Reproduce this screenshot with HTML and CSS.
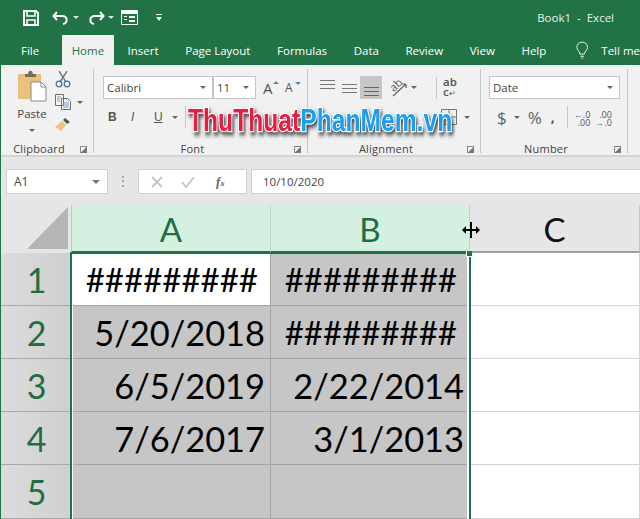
FILE: index.html
```html
<!DOCTYPE html>
<html lang="en">
<head>
  <meta charset="UTF-8" />
  <title>Book1 - Excel</title>
  <link rel="stylesheet" href="styles.css">
</head>
<body>
<div class="app">

  <div class="titlebar">
    <svg class="qat-save" width="18" height="18" viewBox="0 0 18 18"><path d="M2 2h12l2 2v12H2z" fill="none" stroke="#fff" stroke-width="2"/><path d="M5 2v5h8V2M5 16v-5h8v5" fill="none" stroke="#fff" stroke-width="1.6"/></svg>
    <svg class="qat-undo" width="18" height="14" viewBox="0 0 18 14"><path d="M5 1L1.500 5 5 9M2 5h8c6 0 6 7 1 8" fill="none" stroke="#fff" stroke-width="2"/></svg>
    <span class="qat-caret"></span>
    <svg class="qat-redo" width="18" height="14" viewBox="0 0 18 14"><path d="M13 1l3.500 4L13 9M16 5H8c-6 0-6 7-1 8" fill="none" stroke="#fff" stroke-width="2"/></svg>
    <span class="qat-caret"></span>
    <svg class="qat-form" width="17" height="15" viewBox="0 0 17 15"><path d="M.5.500h16v14H.500z" fill="none" stroke="#fff"/><path d="M1 1h15v3H1zM3 6h3v1H3zM3 9h3v1H3zM8 6h6v2H8zM8 10h6v2H8z" fill="#fff"/></svg>
    <svg class="qat-more" width="6" height="8" viewBox="0 0 6 8"><path d="M0 0h6v1H0zM0 3h6L3 7z" fill="#fff"/></svg>
    <span class="doc-title">Book1&nbsp; -&nbsp; Excel</span>
  </div>

  <div class="tabs">
    <span class="tab tab-file">File</span>
    <span class="tab tab-home">Home</span>
    <span class="tab">Insert</span>
    <span class="tab">Page Layout</span>
    <span class="tab">Formulas</span>
    <span class="tab">Data</span>
    <span class="tab">Review</span>
    <span class="tab">View</span>
    <span class="tab">Help</span>
    <svg class="bulb" width="14" height="19" viewBox="0 0 14 19"><path d="M4.500 13.500C4 10 1 9 1 6a6 6 0 0 1 12 0c0 3-3 4-3.500 7.500zM5 16h4M6 18h2" fill="none" stroke="#fff"/></svg>
    <span class="tab tab-tell">Tell me</span>
  </div>

  <div class="ribbon">
    <section class="group group-clip">
      <div class="group-body clip-body">
        <div class="paste">
          <svg width="30" height="31" viewBox="0 0 30 31"><path d="M1 3h23v25H1z" fill="#e8c27c"/><path d="M8 5V3h3l1-3h3l1 3h3v3H8z" fill="#7a6a58"/><path d="M14 11h10l5 5v14H14z" fill="#fff" stroke="#8a8a8a"/><path d="M24 11v5h5" fill="none" stroke="#8a8a8a"/></svg>
          <span class="paste-label">Paste</span>
          <span class="caret caret-paste"></span>
        </div>
        <div class="clip-tools">
          <svg width="16" height="17" viewBox="0 0 16 17"><path d="M4 0l7 11M12 0L5 11" stroke="#777" stroke-width="1.400" fill="none"/><circle cx="4" cy="13" r="2.800" fill="none" stroke="#3f78ae" stroke-width="1.300"/><circle cx="12" cy="13" r="2.800" fill="none" stroke="#3f78ae" stroke-width="1.300"/></svg>
          <div class="copy-row">
            <svg width="16" height="16" viewBox="0 0 16 16"><path d="M.5.500h8v11h-8zM6.500 4.500h6l3 3v8h-9z" fill="#f4f4f4" stroke="#6d6d6d"/><path d="M8 9h6M8 11h6M8 13h6M2 3h4M2 5h3M2 7h3" stroke="#7b9cbc"/></svg>
            <span class="caret"></span>
          </div>
          <svg class="brush" width="16" height="15" viewBox="0 0 16 15"><path d="M10 1l5 4-3 2-4-4z" fill="#555"/><path d="M7 4l4 4-5 6-6-4z" fill="#ecc37f"/></svg>
        </div>
      </div>
      <div class="group-label">Clipboard<i class="launcher"></i></div>
    </section>

    <section class="group group-font">
      <div class="group-body">
        <div class="tool-row">
          <div class="combo combo-font">Calibri<span class="caret"></span></div>
          <div class="combo combo-size">11<span class="caret"></span></div>
          <span class="grow-a">A<i class="tick tick-up"></i></span>
          <span class="grow-a grow-small">A<i class="tick tick-down"></i></span>
        </div>
        <div class="tool-row row-two row-fmt">
          <b class="fmt">B</b>
          <i class="fmt fmt-i">I</i>
          <u class="fmt fmt-u">U</u>
          <span class="caret"></span>
          <span class="v-sep"></span>
        </div>
      </div>
      <div class="group-label">Font<i class="launcher"></i></div>
    </section>

    <section class="group group-align">
      <div class="group-body">
        <div class="tool-row">
          <svg class="lines lines-top" width="15" height="9" viewBox="0 0 15 9"><path d="M0 .500h15M0 4.500h15M0 8.500h15" stroke="#777"/></svg>
          <svg class="lines lines-mid" width="15" height="9" viewBox="0 0 15 9"><path d="M0 .500h15M0 4.500h15M0 8.500h15" stroke="#777"/></svg>
          <span class="active-btn"><svg width="15" height="9" viewBox="0 0 15 9"><path d="M0 .500h15M0 4.500h15M0 8.500h15" stroke="#666"/></svg></span>
          <span class="orient">
            <span class="orient-text">ab</span>
            <svg width="20" height="19" viewBox="0 0 20 19"><path d="M5 18L18 6M18 6h-4M18 6v4" fill="none" stroke="#666" stroke-width="1.200"/></svg>
          </span>
          <span class="caret caret-orient"></span>
          <span class="v-sep sep-wrap"></span>
          <span class="wrap-text">ab<br>c<em>↵</em></span>
        </div>
        <div class="tool-row row-two row-merge">
          <svg width="16" height="16" viewBox="0 0 16 16"><path d="M.5.500h15v15H.500zM8 1v4M8 11v4M1 8h14" fill="none" stroke="#777"/></svg>
          <span class="caret"></span>
        </div>
      </div>
      <div class="group-label">Alignment<i class="launcher"></i></div>
    </section>

    <section class="group group-number">
      <div class="group-body">
        <div class="tool-row">
          <div class="combo combo-number">Date<span class="caret"></span></div>
        </div>
        <div class="tool-row row-two row-num">
          <span class="num-sign">$</span>
          <span class="caret"></span>
          <span class="num-sign num-pct">%</span>
          <span class="num-comma">,</span>
          <span class="v-sep sep-num"></span>
          <span class="dec">
            <span><b class="arrow">←</b>.0</span>
            <span>.00</span>
          </span>
          <span class="dec dec-right">
            <span>.00</span>
            <span><b class="arrow">→</b>.0</span>
          </span>
        </div>
      </div>
      <div class="group-label">Number<i class="launcher"></i></div>
    </section>
  </div>

  <div class="formula-bar">
    <div class="name-box">A1<span class="caret caret-name"></span></div>
    <span class="grip"></span>
    <div class="fx-box">
      <svg width="12" height="12" viewBox="0 0 12 12"><path d="M1 1l10 10M11 1L1 11" stroke="#c4c4c4" stroke-width="1.800"/></svg>
      <svg width="14" height="12" viewBox="0 0 14 12"><path d="M1 6l4 5 8-10" fill="none" stroke="#c4c4c4" stroke-width="1.800"/></svg>
      <span class="fx">f<small>x</small></span>
    </div>
    <div class="formula-input">10/10/2020</div>
  </div>

  <div class="sheet">
    <div class="corner"><svg width="45" height="44" viewBox="0 0 45 44"><path d="M1 43L42 1v42z" fill="#b5b5b5"/></svg></div>
    <div class="col-head active">A</div>
    <div class="col-head active">B</div>
    <div class="col-head">C</div>

    <div class="row-head">1</div>
    <div class="cell first hash">#########</div>
    <div class="cell sel hash">#########</div>
    <div class="cell"></div>

    <div class="row-head">2</div>
    <div class="cell sel">5/20/2018</div>
    <div class="cell sel hash">#########</div>
    <div class="cell"></div>

    <div class="row-head">3</div>
    <div class="cell sel">6/5/2019</div>
    <div class="cell sel">2/22/2014</div>
    <div class="cell"></div>

    <div class="row-head">4</div>
    <div class="cell sel">7/6/2017</div>
    <div class="cell sel">3/1/2013</div>
    <div class="cell"></div>

    <div class="row-head">5</div>
    <div class="cell sel"></div>
    <div class="cell sel"></div>
    <div class="cell"></div>

    <div class="selection"><span class="handle"></span></div>
    <svg class="resize-cursor" width="18" height="16" viewBox="0 0 18 16"><path d="M8 0h2v16H8z" fill="#000"/><path d="M0 8l4-4v3h4v2H4v3zM18 8l-4-4v3h-4v2h4v3z" fill="#000"/></svg>
  </div>

  <div class="watermark"><span class="wm-red">ThuThuat</span><span class="wm-blue">PhanMem.vn</span></div>
</div>
</body>
</html>
```

FILE: styles.css
```css
* {
  box-sizing: border-box;
}

body {
  margin: 0;
  overflow: hidden;
  font-family: 'Open Sans', 'Noto Sans', sans-serif;
  color: #444;
}

.app {
  position: relative;
  width: 640px;
  height: 519px;
  overflow: hidden;
  background: #fff;
  border-left: 1px solid #217346;
}

/* title bar */
.titlebar {
  height: 35px;
  background: #217346;
  display: flex;
  align-items: center;
  color: #fff;
}

.qat-save { margin-left: 21px; }
.qat-undo { margin-left: 12px; }
.qat-redo { margin-left: 8px; }
.qat-form { margin-left: 7px; }
.qat-more { margin-left: 18px; }

.qat-caret {
  width: 0;
  height: 0;
  margin-left: 3px;
  border: 3px solid transparent;
  border-top: 3px solid #d8e6de;
  border-bottom: 0;
}

.doc-title {
  margin-left: auto;
  margin-right: 26px;
  font-size: 11.500px;
  color: #e9f1ec;
}

/* tabs */
.tabs {
  height: 30px;
  background: #217346;
  display: flex;
  align-items: stretch;
  padding-left: 20px;
  font-size: 11.500px;
  color: #fff;
}

.tab {
  display: flex;
  align-items: center;
  margin-right: 26.600px;
  padding-top: 1px;
  white-space: nowrap;
}

.tab-file { margin-right: 23px; }

.tab-home {
  width: 58px;
  margin-right: 14px;
  justify-content: center;
  background: #f1f1f1;
  color: #217346;
}

.bulb {
  margin: 6px 13px 0 3px;
}

.tab-tell { margin-right: 0; }

/* ribbon */
.ribbon {
  height: 92px;
  background: #f1f1f1;
  border-bottom: 2px solid #d4d4d4;
  display: flex;
  padding-top: 4px;
}

.group {
  height: 84px;
  display: flex;
  flex-direction: column;
  border-right: 1px solid #c6c6c6;
}

.group-clip { width: 93px; }
.group-font { width: 214px; }
.group-align { width: 173px; }
.group-number { width: 147px; }

.group-body {
  flex: 1;
  padding-top: 7px;
}

.group-label {
  position: relative;
  height: 10px;
  padding-right: 16px;
  text-align: center;
  font-size: 11px;
  line-height: 12px;
  letter-spacing: 0.200px;
}

.launcher {
  position: absolute;
  right: 6px;
  top: 3px;
  width: 7px;
  height: 7px;
  border-left: 1px solid #888;
  border-top: 1px solid #888;
  background: linear-gradient(135deg, transparent 45%, #777 45%);
}

.caret {
  display: inline-block;
  width: 0;
  height: 0;
  border: 3px solid transparent;
  border-top: 3px solid #666;
  border-bottom: 0;
}

.tool-row {
  display: flex;
  align-items: center;
  height: 23px;
}

.row-two {
  height: 20px;
  margin-top: 8px;
}

.v-sep {
  width: 1px;
  height: 22px;
  background: #c6c6c6;
}

/* clipboard */
.clip-body {
  display: flex;
  padding-left: 16px;
  padding-top: 2px;
}

.paste {
  width: 30px;
  display: flex;
  flex-direction: column;
  align-items: center;
}

.paste-label {
  margin-top: 4px;
  font-size: 11.500px;
  line-height: 16px;
}

.caret-paste {
  margin-top: 7px;
}

.clip-tools {
  margin-left: 8px;
  display: flex;
  flex-direction: column;
  gap: 6px;
}

.copy-row {
  display: flex;
  align-items: center;
  gap: 6px;
}

.clip-tools svg {
  display: block;
}

.brush {
  margin-top: 1px;
}

/* font */
.group-font .group-body {
  padding-left: 9px;
}

.combo {
  height: 23px;
  background: #fff;
  border: 1px solid #c6c6c6;
  display: flex;
  align-items: center;
  justify-content: space-between;
  padding: 0 6px 0 3px;
  font-size: 11.500px;
  color: #444;
}

.combo-font { width: 110px; }
.combo-size { width: 43px; }

.grow-a {
  position: relative;
  margin-left: 7px;
  width: 22px;
  font-size: 15px;
  color: #555;
}

.grow-small {
  margin-left: 0;
  font-size: 12px;
}

.tick {
  position: absolute;
  top: 3px;
  left: 10px;
  border: 3px solid transparent;
  border-bottom: 3px solid #5b87ad;
  border-top: 0;
}

.tick-down {
  border-top: 3px solid #5b87ad;
  border-bottom: 0;
}

.row-fmt {
  margin-left: -4px;
}

.row-two .fmt {
  width: 23px;
  padding-left: 9px;
  font-size: 12px;
  color: #555;
  font-family: 'Liberation Sans', sans-serif;
}

.row-two .fmt-u {
  margin-right: 4px;
}

.row-two .v-sep {
  margin-left: 7px;
}

/* alignment */
.group-align .group-body {
  padding-left: 12px;
}

.lines-top {
  margin: -6px 0 0 0;
}

.lines-mid {
  margin: 2px 0 0 7px;
}

.active-btn {
  width: 22px;
  height: 23px;
  margin-left: 3px;
  background: #c6c6c6;
  display: flex;
  align-items: flex-end;
  justify-content: center;
  padding-bottom: 3px;
}

.orient {
  position: relative;
  width: 20px;
  height: 19px;
  margin-left: 6px;
}

.orient svg {
  display: block;
}

.orient-text {
  position: absolute;
  left: 1px;
  top: 0;
  font-size: 11px;
  line-height: 13px;
  color: #555;
  transform: rotate(-42deg);
}

.caret-orient {
  margin-left: 3px;
}

.row-two .sep-wrap,
.sep-wrap {
  margin-left: 19px;
}

.wrap-text {
  margin-left: 6px;
  font-size: 11.500px;
  line-height: 10px;
  font-weight: 600;
  color: #555;
}

.wrap-text em {
  font-style: normal;
  font-size: 8px;
  font-weight: normal;
}

.row-merge {
  padding-left: 121px;
  gap: 7px;
}

/* number */
.group-number .group-body {
  padding-left: 8px;
}

.combo-number {
  width: 131px;
  padding-left: 3px;
}

.row-num {
  padding-left: 8px;
}

.num-sign {
  font-size: 17px;
  color: #666;
}

.row-num .caret {
  margin-left: 7px;
}

.num-pct {
  margin-left: 8px;
}

.num-comma {
  margin-left: 9px;
  font-size: 14px;
  font-weight: bold;
  color: #555;
  line-height: 10px;
}

.row-num .sep-num {
  margin-left: 12px;
}

.dec {
  display: flex;
  flex-direction: column;
  align-items: flex-end;
  margin-left: 6px;
  padding-top: 3px;
  font-size: 9px;
  line-height: 8px;
  color: #555;
}

.dec-right {
  margin-left: 5px;
}

.arrow {
  color: #4a79a5;
  font-weight: normal;
}

/* formula bar */
.formula-bar {
  height: 48px;
  background: #e6e6e6;
  display: flex;
  align-items: flex-start;
  padding: 12px 0 0 5px;
}

.name-box {
  width: 102px;
  height: 25px;
  background: #fff;
  border: 1px solid #d0d0d0;
  display: flex;
  align-items: center;
  justify-content: space-between;
  padding: 0 7px;
  font-size: 12px;
}

.caret-name {
  border-width: 4px;
  border-top-width: 4px;
  border-top-color: #777;
}

.grip {
  width: 2px;
  height: 11px;
  margin: 7px 14px 0 14px;
  background: repeating-linear-gradient(#aaa 0 2px, transparent 2px 4.500px);
}

.fx-box {
  width: 109px;
  height: 25px;
  background: #fff;
  border: 1px solid #d0d0d0;
  display: flex;
  align-items: center;
  padding-left: 12px;
  gap: 18px;
}

.fx {
  margin-left: 3px;
  font-family: 'Liberation Serif', serif;
  font-style: italic;
  font-weight: bold;
  font-size: 13px;
  color: #666;
}

.fx small {
  font-size: 9px;
}

.formula-input {
  flex: 1;
  height: 25px;
  margin-left: 4px;
  padding-left: 11px;
  background: #fff;
  border: 1px solid #d0d0d0;
  border-right: 0;
  display: flex;
  align-items: center;
  font-size: 11.500px;
}

/* sheet */
.sheet {
  position: relative;
  display: grid;
  grid-template-columns: 71px 199px 199px 170px;
  grid-template-rows: 48px 53px 53px 53px 53px 54px;
  background: #fff;
  font-family: Lato, 'Liberation Sans', sans-serif;
}

.corner {
  background: #e6e6e6;
  border-right: 1px solid #c6c6c6;
  display: flex;
  align-items: flex-end;
  justify-content: flex-end;
  padding: 0 0 3px 0;
}

.col-head {
  background: #e6e6e6;
  border-right: 1px solid #c6c6c6;
  border-bottom: 2px solid #9f9f9f;
  display: flex;
  align-items: center;
  justify-content: center;
  font-size: 33px;
  color: #111;
  padding-top: 2px;
}

.col-head.active {
  background: #d3f0e0;
  color: #1f6e43;
  border-bottom-color: #1f6e43;
  border-right-color: #bcd9c9;
}

.row-head {
  background: linear-gradient(90deg, #dcdcdc, #cfcfcf);
  border-bottom: 1px solid #a8a8a8;
  display: flex;
  align-items: center;
  justify-content: center;
  font-size: 34px;
  color: #1f6e43;
}

.cell {
  display: flex;
  align-items: center;
  justify-content: flex-end;
  padding-right: 5px;
  font-size: 34.400px;
  color: #000;
  border-right: 1px solid #d4d4d4;
  border-bottom: 1px solid #d4d4d4;
  white-space: nowrap;
}

.cell.hash {
  font-size: 33px;
  padding-right: 12px;
}

.cell.sel {
  background: #c6c6c6;
  border-right-color: #a4a4a4;
  border-bottom-color: #a4a4a4;
}

.cell.first {
  background: #fff;
  border-right-color: #a4a4a4;
  border-bottom-color: #a4a4a4;
}

.selection {
  position: absolute;
  left: 69px;
  top: 47px;
  width: 401px;
  height: 272px;
  border: 2px solid #217346;
  box-shadow: inset 1px 0 0 #fff, inset -2px 0 0 #fff;
}

.handle {
  position: absolute;
  right: -3px;
  top: -3px;
  width: 6px;
  height: 6px;
  background: #217346;
  border-left: 1px solid #fff;
  border-bottom: 1px solid #fff;
}

.resize-cursor {
  position: absolute;
  left: 461px;
  top: 17px;
}

/* watermark over the ribbon */
.watermark {
  position: absolute;
  left: 187px;
  top: 101px;
  font-family: 'Liberation Sans', sans-serif;
  font-weight: bold;
  font-size: 32px;
  line-height: 38px;
  white-space: nowrap;
  -webkit-text-stroke: 2.500px #fff;
  paint-order: stroke fill;
  transform: scaleX(0.770);
  transform-origin: left top;
  filter: drop-shadow(2px 3px 2px rgba(30, 30, 30, 0.800));
}

.wm-red { color: #e61c45; }
.wm-blue { color: #1a9df2; }
```
